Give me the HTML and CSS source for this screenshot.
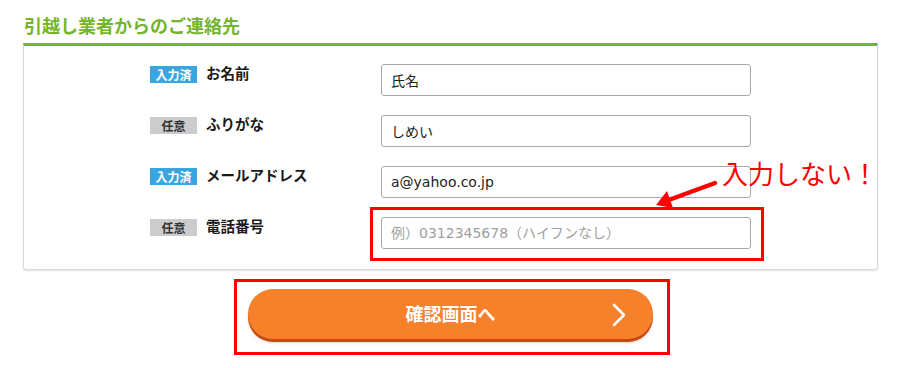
FILE: index.html
```html
<!DOCTYPE html>
<html lang="ja">
<head>
<meta charset="utf-8">
<link rel="stylesheet" href="styles.css">
</head>
<body>
<div class="page">
  <h2 class="title">引越し業者からのご連絡先</h2>
  <div class="card">
    <div class="row">
      <div class="label"><span class="badge done">入力済</span><span class="name">お名前</span></div>
      <input class="field" type="text" value="氏名">
    </div>
    <div class="row">
      <div class="label"><span class="badge opt">任意</span><span class="name">ふりがな</span></div>
      <input class="field" type="text" value="しめい">
    </div>
    <div class="row">
      <div class="label"><span class="badge done">入力済</span><span class="name">メールアドレス</span></div>
      <input class="field" type="text" value="a@yahoo.co.jp">
    </div>
    <div class="row">
      <div class="label"><span class="badge opt">任意</span><span class="name">電話番号</span></div>
      <input class="field" type="text" placeholder="例）0312345678（ハイフンなし）">
    </div>
  </div>
  <div class="actions">
    <button class="submit" type="button">確認画面へ<svg class="chev" width="14" height="24" viewBox="0 0 14 24"><path d="M2 2 L12 12 L2 22" fill="none" stroke="#fff" stroke-width="2.6" stroke-linecap="round" stroke-linejoin="round"/></svg></button>
  </div>

  <div class="mark mark-input"></div>
  <div class="mark mark-button"></div>
  <div class="note">入力しない！</div>
  <svg class="arrow" width="80" height="40" viewBox="0 0 80 40">
    <line x1="63" y1="9" x2="14" y2="27" stroke="#ff0000" stroke-width="4.5" stroke-linecap="round"/>
    <polygon points="4,31 15,17 21,34" fill="#ff0000"/>
  </svg>
</div>
</body>
</html>
```

FILE: styles.css
```css
html, body {
  margin: 0;
  padding: 0;
  background: #fff;
}
body {
  font-family: "DejaVu Sans", "Noto Sans CJK JP", sans-serif;
  color: #222;
}
.page {
  position: relative;
  width: 897px;
  height: 368px;
  overflow: hidden;
}
.title {
  margin: 0;
  padding: 12px 0 0 24px;
  height: 30px;
  box-sizing: border-box;
  font-family: "Noto Sans CJK JP", sans-serif;
  font-size: 18px;
  line-height: 26px;
  font-weight: bold;
  color: #74b52b;
}
.card {
  margin: 13px 19px 0 23px;
  border: 1px solid #d8d8d8;
  border-top: 3px solid #74b52b;
  border-radius: 0 0 3px 3px;
  box-shadow: 0 1px 2px rgba(0,0,0,0.12);
  padding: 19px 0 19px 126px;
  display: flex;
  flex-direction: column;
  gap: 19px;
}
.row {
  display: flex;
  align-items: flex-start;
  height: 32px;
}
.label {
  width: 231px;
  display: flex;
  align-items: center;
  gap: 9px;
  padding-top: 1px;
}
.badge {
  display: inline-block;
  width: 47px;
  height: 17px;
  line-height: 17px;
  text-align: center;
  font-family: "Noto Sans CJK JP", sans-serif;
  font-size: 12px;
  font-weight: bold;
}
.badge.done {
  background: #3aa6df;
  color: #fff;
}
.badge.opt {
  background: #cccccc;
  color: #333;
}
.name {
  font-family: "Noto Sans CJK JP", sans-serif;
  font-size: 14.5px;
  font-weight: bold;
  color: #1a1a1a;
  line-height: 17px;
  position: relative;
  top: -2px;
}
.field {
  width: 370px;
  height: 32px;
  box-sizing: border-box;
  margin: -1px 0 0 0;
  border: 1px solid #a9a9a9;
  border-radius: 3px;
  padding: 0 9px;
  font-family: "DejaVu Sans", "Noto Sans CJK JP", sans-serif;
  font-size: 14px;
  color: #222;
  background: #fff;
  outline: none;
}
.field::placeholder {
  color: #a0a0a0;
}
.actions {
  display: flex;
  justify-content: center;
  padding: 19px 0 0 4px;
}
.submit {
  position: relative;
  width: 405px;
  height: 50px;
  border: none;
  border-radius: 25px;
  background: #f7812a;
  box-shadow: 0 3px 0 #c8480e, 0 4px 3px rgba(0,0,0,0.15);
  color: #fff;
  font-family: "Noto Sans CJK JP", sans-serif;
  font-size: 18px;
  font-weight: bold;
  padding: 0 0 2px 0;
  cursor: pointer;
}
.chev {
  position: absolute;
  right: 27px;
  top: 14px;
}
.mark {
  position: absolute;
  border: 3px solid #ff0000;
  box-sizing: border-box;
}
.mark-input {
  left: 370px;
  top: 207px;
  width: 394px;
  height: 54px;
}
.mark-button {
  left: 234px;
  top: 279px;
  width: 436px;
  height: 76px;
}
.note {
  position: absolute;
  left: 722px;
  top: 155px;
  font-family: "Noto Sans CJK JP", sans-serif;
  font-size: 26px;
  line-height: 36px;
  color: #ff0000;
  white-space: nowrap;
}
.arrow {
  position: absolute;
  left: 652px;
  top: 174px;
}
```
